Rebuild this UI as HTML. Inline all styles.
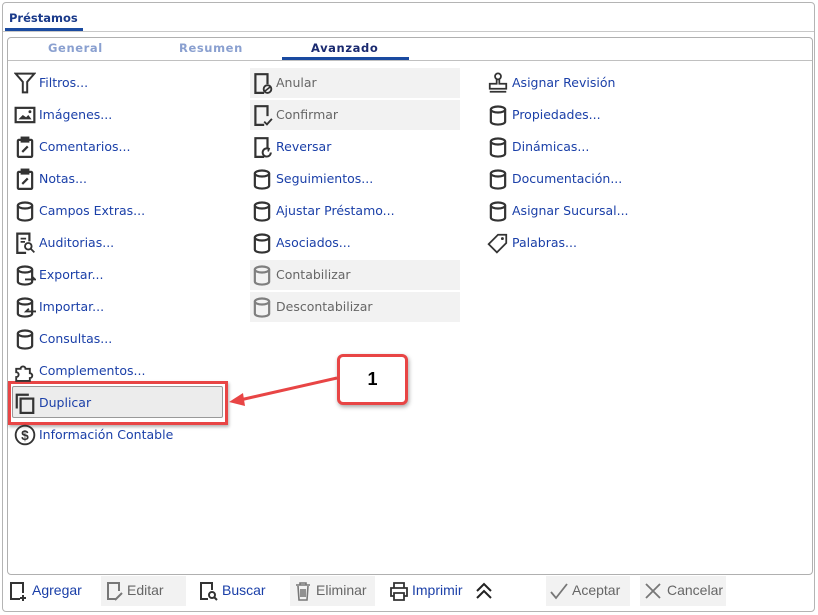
<!DOCTYPE html>
<html><head><meta charset="utf-8"><style>
*{margin:0;padding:0;box-sizing:border-box}
body{width:818px;height:615px;background:#fff;position:relative;overflow:hidden;font-family:"DejaVu Sans","Liberation Sans",sans-serif;font-size:12.5px;color:#1a3fa8}
.frame{position:absolute;left:2px;top:2px;width:813px;height:610px;border:1px solid #b4b4b4;border-radius:4px}
.ttl{position:absolute;left:9px;top:11px;font-weight:bold;font-size:11.5px;color:#1a3a8a}
.ttlu{position:absolute;left:5px;top:28px;width:78px;height:3px;background:#1a4aa0}
.hl{position:absolute;left:3px;top:31px;width:811px;height:1px;background:#c8c8c8}
.panel{position:absolute;left:7px;top:37px;width:806px;height:538px;border:1px solid #b0b0b0;border-radius:4px}
.tabline{position:absolute;left:8px;top:60px;width:804px;height:1px;background:#c0c0c0}
.tab{position:absolute;top:41px;font-weight:bold;font-size:11.5px;letter-spacing:.6px;color:#8aa0d0}
.tabu{position:absolute;left:282px;top:57px;width:127px;height:3px;background:#1a4aa0}
.it{position:absolute;height:30px;line-height:30px;white-space:nowrap}
.it svg{position:absolute;left:-25px;top:4px;width:22px;height:22px}
.dis{color:#666}
.box{position:absolute;left:250px;width:210px;height:30px;background:#f2f2f2}
.ann{position:absolute;left:337px;top:354px;width:71px;height:51px;border:3px solid #e84545;border-radius:6px;background:#fff;box-shadow:1px 2px 4px rgba(0,0,0,.35);font:bold 18px "Liberation Sans",sans-serif;color:#000;text-align:center;line-height:45px}
.dup{position:absolute;left:8px;top:381px;width:220px;height:44px;border:3px solid #e84545;box-shadow:1px 2px 3px rgba(0,0,0,.3)}
.dupi{position:absolute;left:12px;top:386px;width:211px;height:32px;background:#ececec;border:1px solid #999;border-radius:2px}
.tb{position:absolute;top:576px;height:30px;line-height:28px;font-family:"Liberation Sans Narrow","Liberation Sans",sans-serif;font-size:14px;white-space:nowrap}
.tb svg{position:absolute;top:4px;width:22px;height:22px}
.g{background:#f2f2f2;color:#666}
</style></head><body>
<div class="frame"></div>
<div class="ttl">Préstamos</div><div class="ttlu"></div><div class="hl"></div>
<div class="panel"></div><div class="tabline"></div>
<div class="tab" style="left:48px">General</div>
<div class="tab" style="left:179px">Resumen</div>
<div class="tab" style="left:311px;color:#1a2a70">Avanzado</div>
<div class="tabu"></div>

<div class="box" style="top:68px"></div><div class="box" style="top:100px"></div>
<div class="box" style="top:260px"></div><div class="box" style="top:292px"></div>
<div class="dup"></div><div class="dupi"></div>

<svg width="0" height="0" style="position:absolute"><defs>
<g id="db" fill="none" stroke="#333" stroke-width="2"><ellipse cx="10" cy="5" rx="6.5" ry="2.7"/><path d="M3.5 5v11c0 1.6 2.9 2.7 6.5 2.7s6.5-1.1 6.5-2.7V5"/></g>
<g id="clip" fill="none" stroke="#333" stroke-width="2"><rect x="3.5" y="3.5" width="13" height="15.5" rx="1"/><rect x="7" y="1.5" width="6" height="3.5" fill="#333"/><path d="M7.5 14.5l5-5" /></g>
<g id="doc" fill="none" stroke="#333" stroke-width="2"><path d="M12 19H4V2h11v9"/></g>
</defs></svg>

<div class="it" style="left:39px;top:68px"><svg viewBox="0 0 20 20"><path d="M1.5 1.5h17l-6.5 7.5v9.5h-4V9z" fill="none" stroke="#333" stroke-width="1.8"/></svg>Filtros...</div>
<div class="it" style="left:39px;top:100px"><svg viewBox="0 0 20 20"><rect x="1.5" y="3.5" width="17" height="13" fill="none" stroke="#333" stroke-width="2"/><path d="M4 14l4-4 3 2 2-2 3 4z" fill="#333"/><circle cx="14.5" cy="7" r="1.3" fill="#333"/></svg>Imágenes...</div>
<div class="it" style="left:39px;top:132px"><svg viewBox="0 0 20 20"><use href="#clip"/></svg>Comentarios...</div>
<div class="it" style="left:39px;top:164px"><svg viewBox="0 0 20 20"><use href="#clip"/></svg>Notas...</div>
<div class="it" style="left:39px;top:196px"><svg viewBox="0 0 20 20"><use href="#db"/></svg>Campos Extras...</div>
<div class="it" style="left:39px;top:228px"><svg viewBox="0 0 20 20"><path d="M11 19H3V1.5h11v7" fill="none" stroke="#333" stroke-width="2"/><circle cx="13" cy="13" r="3" fill="none" stroke="#333" stroke-width="1.7"/><path d="M15 15l3.5 3.5M6 6h5M6 9h4" stroke="#333" stroke-width="1.6"/></svg>Auditorias...</div>
<div class="it" style="left:39px;top:260px"><svg viewBox="0 0 20 20"><use href="#db"/><path d="M10 14h9l-2.5-2.5" fill="none" stroke="#333" stroke-width="1.7"/></svg>Exportar...</div>
<div class="it" style="left:39px;top:292px"><svg viewBox="0 0 20 20"><use href="#db"/><path d="M20 14h-9l2.5-2.5" fill="none" stroke="#333" stroke-width="1.7"/></svg>Importar...</div>
<div class="it" style="left:39px;top:324px"><svg viewBox="0 0 20 20"><use href="#db"/></svg>Consultas...</div>
<div class="it" style="left:39px;top:356px"><svg viewBox="0 0 20 20"><path d="M2 8h4a2.2 2.2 0 1 1 4.4 0h4v4a2.2 2.2 0 1 1 0 4.4V19H2v-3.5a2.2 2.2 0 1 0 0-4.4z" fill="none" stroke="#333" stroke-width="1.7"/></svg>Complementos...</div>
<div class="it" style="left:39px;top:388px"><svg viewBox="0 0 20 20"><path d="M2.5 15V2.5h11" fill="none" stroke="#333" stroke-width="2"/><rect x="6" y="6" width="11.5" height="13" fill="none" stroke="#333" stroke-width="2"/></svg>Duplicar</div>
<div class="it" style="left:39px;top:420px"><svg viewBox="0 0 20 20"><circle cx="10" cy="10" r="8.5" fill="none" stroke="#333" stroke-width="1.7"/><text x="10" y="14.5" text-anchor="middle" font-size="12.5" font-weight="bold" fill="#333" font-family="Liberation Sans">$</text></svg>Información Contable</div>

<div class="it dis" style="left:276px;top:68px"><svg viewBox="0 0 20 20"><use href="#doc"/><circle cx="15" cy="15.5" r="3.5" fill="none" stroke="#333" stroke-width="1.7"/><path d="M12.5 17.5l5-4" stroke="#333" stroke-width="1.5"/></svg>Anular</div>
<div class="it dis" style="left:276px;top:100px"><svg viewBox="0 0 20 20"><use href="#doc"/><path d="M12 16l2.5 2.5 4.5-5" fill="none" stroke="#333" stroke-width="1.7"/></svg>Confirmar</div>
<div class="it" style="left:276px;top:132px"><svg viewBox="0 0 20 20"><use href="#doc"/><path d="M18 15a3.7 3.7 0 1 1-2-3.3" fill="none" stroke="#333" stroke-width="1.8"/><path d="M14 10.5l2.5 1-1 2.5" fill="none" stroke="#333" stroke-width="1.5"/></svg>Reversar</div>
<div class="it" style="left:276px;top:164px"><svg viewBox="0 0 20 20"><use href="#db"/></svg>Seguimientos...</div>
<div class="it" style="left:276px;top:196px"><svg viewBox="0 0 20 20"><use href="#db"/></svg>Ajustar Préstamo...</div>
<div class="it" style="left:276px;top:228px"><svg viewBox="0 0 20 20"><use href="#db"/></svg>Asociados...</div>
<div class="it dis" style="left:276px;top:260px"><svg viewBox="0 0 20 20"><use href="#db" opacity=".6"/></svg>Contabilizar</div>
<div class="it dis" style="left:276px;top:292px"><svg viewBox="0 0 20 20"><use href="#db" opacity=".6"/></svg>Descontabilizar</div>

<div class="it" style="left:512px;top:68px"><svg viewBox="0 0 20 20"><circle cx="10" cy="4" r="2.7" fill="none" stroke="#333" stroke-width="1.6"/><path d="M8.8 6.7v4H2.5v4.5h15v-4.5h-6.3v-4M2.5 18h15" fill="none" stroke="#333" stroke-width="1.6"/></svg>Asignar Revisión</div>
<div class="it" style="left:512px;top:100px"><svg viewBox="0 0 20 20"><use href="#db"/></svg>Propiedades...</div>
<div class="it" style="left:512px;top:132px"><svg viewBox="0 0 20 20"><use href="#db"/></svg>Dinámicas...</div>
<div class="it" style="left:512px;top:164px"><svg viewBox="0 0 20 20"><use href="#db"/></svg>Documentación...</div>
<div class="it" style="left:512px;top:196px"><svg viewBox="0 0 20 20"><use href="#db"/></svg>Asignar Sucursal...</div>
<div class="it" style="left:512px;top:228px"><svg viewBox="0 0 20 20"><path d="M1.5 11l8.5-8.5h7.5v7.5l-8.5 8.5z" fill="none" stroke="#333" stroke-width="1.6"/><circle cx="14" cy="6" r="1.3" fill="#333"/></svg>Palabras...</div>

<svg style="position:absolute;left:0;top:0" width="818" height="615"><path d="M337 378L240 400" stroke="#e84545" stroke-width="3"/><path d="M229 402l14-9 2 13z" fill="#e84545"/></svg>
<div class="ann">1</div>

<div class="tb" style="left:8px;width:80px"><svg viewBox="0 0 22 22" style="left:0"><path d="M12 19H3V3h12v10M15 15v6M12 18h6" fill="none" stroke="#333" stroke-width="2"/></svg><span style="margin-left:24px">Agregar</span></div>
<div class="tb g" style="left:101px;width:85px"><svg viewBox="0 0 22 22" style="left:3px"><path d="M12 19H4V3h11v8M11 20l7-7" fill="none" stroke="#777" stroke-width="2"/></svg><span style="margin-left:26px">Editar</span></div>
<div class="tb" style="left:198px;width:80px"><svg viewBox="0 0 22 22" style="left:0"><path d="M10 19H3V3h11v7" fill="none" stroke="#333" stroke-width="2"/><circle cx="14" cy="15" r="3" fill="none" stroke="#333" stroke-width="2"/><path d="M16 17l3 3" stroke="#333" stroke-width="2"/></svg><span style="margin-left:24px">Buscar</span></div>
<div class="tb g" style="left:290px;width:85px"><svg viewBox="0 0 22 22" style="left:2px"><path d="M4 5h14M8 5V3h6v2M6 6l1 14h8l1-14M9 9v8M11 9v8M13 9v8" fill="none" stroke="#777" stroke-width="1.6"/></svg><span style="margin-left:26px">Eliminar</span></div>
<div class="tb" style="left:386px;width:80px"><svg viewBox="0 0 22 22" style="left:2px"><path d="M6 8V3h10v5M6 16H3V8h16v8h-3M6 13h10v7H6z" fill="none" stroke="#333" stroke-width="1.8"/></svg><span style="margin-left:26px">Imprimir</span></div>
<div class="tb" style="left:473px;width:24px"><svg viewBox="0 0 22 22" style="left:0"><path d="M4 11l7-7 7 7M4 18l7-7 7 7" fill="none" stroke="#222" stroke-width="2"/></svg></div>
<div class="tb g" style="left:546px;width:84px"><svg viewBox="0 0 22 22" style="left:2px"><path d="M3 12l5 6L19 4" fill="none" stroke="#777" stroke-width="1.8"/></svg><span style="margin-left:26px">Aceptar</span></div>
<div class="tb g" style="left:640px;width:86px"><svg viewBox="0 0 22 22" style="left:2px"><path d="M4 4l14 14M18 4L4 18" fill="none" stroke="#777" stroke-width="1.8"/></svg><span style="margin-left:27px">Cancelar</span></div>
</body></html>
